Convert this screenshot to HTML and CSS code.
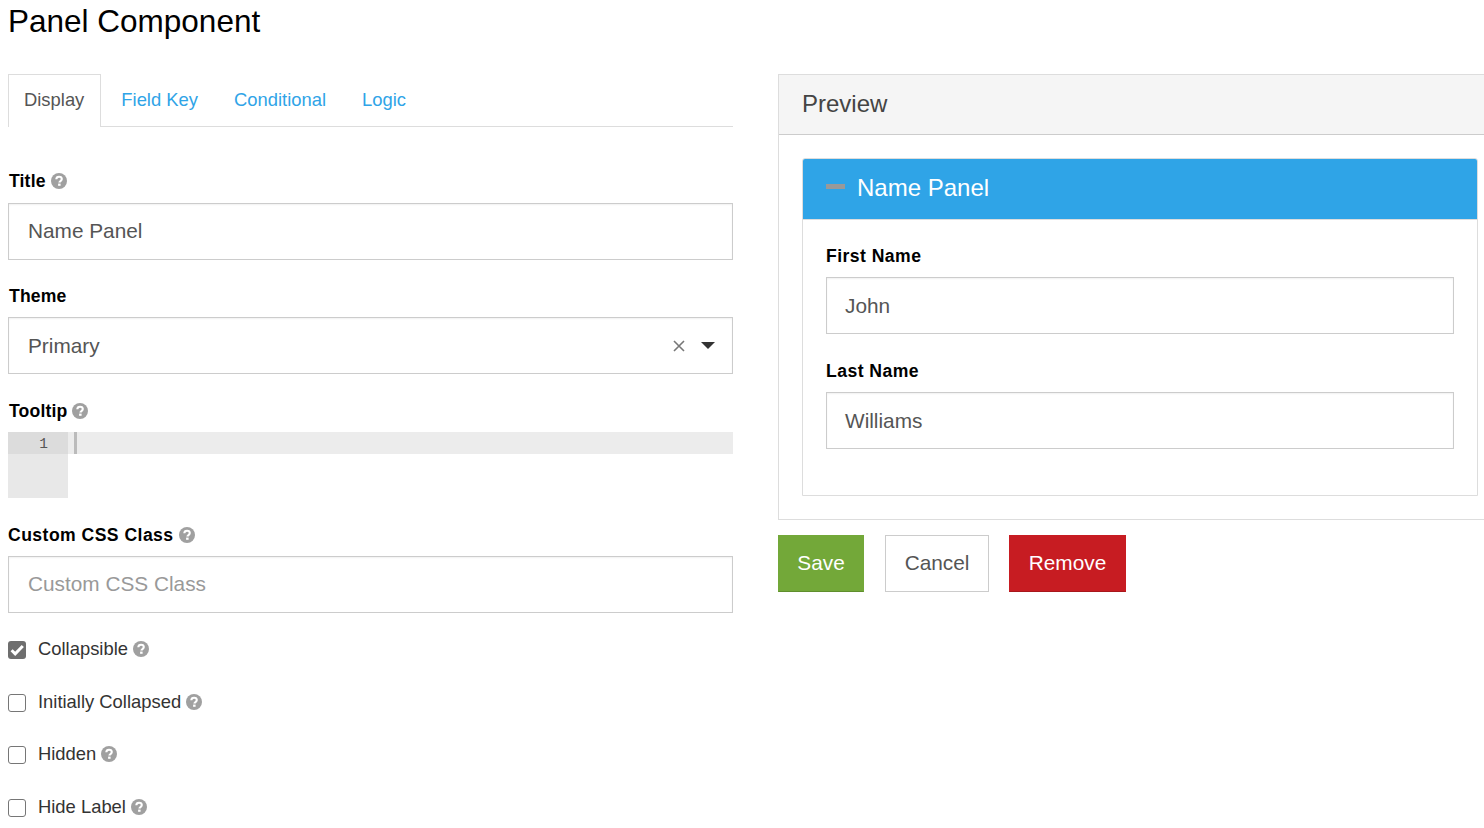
FILE: index.html
```html
<!DOCTYPE html>
<html lang="en">
<head>
  <meta charset="UTF-8">
  <title>Panel Component</title>
  <link rel="stylesheet" href="styles.css">
</head>
<body>
  <svg class="icon-defs" width="0" height="0">
    <symbol id="help" viewBox="0 0 16 16">
      <circle cx="8" cy="8" r="8" fill="#a0a0a0"/>
      <path d="M5.3 6.300C5.400 4.700 6.500 3.800 8 3.800c1.600 0 2.800 .9 2.800 2.300 0 2-2.400 1.900-2.400 3.500" fill="none" stroke="#fff" stroke-width="2.100"/>
      <rect x="7.100" y="10.600" width="2.500" height="2.200" fill="#fff"/>
    </symbol>
  </svg>

  <h1 class="page-title">Panel Component</h1>

  <div class="layout">
    <div class="edit-col">
      <ul class="tabs">
        <li class="tab active">Display</li>
        <li class="tab">Field Key</li>
        <li class="tab">Conditional</li>
        <li class="tab">Logic</li>
      </ul>

      <div class="field field-title">
        <label class="field-label">Title <svg class="help"><use href="#help"/></svg></label>
        <div class="input">Name Panel</div>
      </div>

      <div class="field">
        <label class="field-label">Theme</label>
        <div class="input select">
          <span>Primary</span>
          <span class="select-tools">
            <svg class="clear" width="14" height="14" viewBox="0 0 14 14"><path d="M2 2l10 10M12 2L2 12" stroke="#777" stroke-width="1.600" fill="none"/></svg>
            <span class="caret"></span>
          </span>
        </div>
      </div>

      <div class="field">
        <label class="field-label">Tooltip <svg class="help"><use href="#help"/></svg></label>
        <div class="editor">
          <div class="gutter"><div class="line-no">1</div></div>
          <div class="code"><div class="active-line"><span class="cursor"></span></div></div>
        </div>
      </div>

      <div class="field">
        <label class="field-label wide">Custom CSS Class <svg class="help"><use href="#help"/></svg></label>
        <div class="input placeholder">Custom CSS Class</div>
      </div>

      <div class="check-list">
        <label class="check"><span class="box checked"><svg width="18" height="18" viewBox="0 0 18 18"><path d="M3.600 9.300l3.600 3.600L14.800 5" fill="none" stroke="#fff" stroke-width="3"/></svg></span>Collapsible <svg class="help"><use href="#help"/></svg></label>
        <label class="check"><span class="box"></span>Initially Collapsed <svg class="help"><use href="#help"/></svg></label>
        <label class="check"><span class="box"></span>Hidden <svg class="help"><use href="#help"/></svg></label>
        <label class="check"><span class="box"></span>Hide Label <svg class="help"><use href="#help"/></svg></label>
      </div>
    </div>

    <div class="preview-col">
      <div class="card">
        <div class="card-head">Preview</div>
        <div class="card-body">
          <div class="panel">
            <div class="panel-head"><span class="minus"></span>Name Panel</div>
            <div class="panel-body">
              <div class="field">
                <label class="field-label wide">First Name</label>
                <div class="input">John</div>
              </div>
              <div class="field">
                <label class="field-label wide">Last Name</label>
                <div class="input">Williams</div>
              </div>
            </div>
          </div>
        </div>
      </div>
      <div class="actions">
        <button class="btn btn-save">Save</button>
        <button class="btn btn-cancel">Cancel</button>
        <button class="btn btn-remove">Remove</button>
      </div>
    </div>
  </div>
</body>
</html>
```

FILE: styles.css
```css
html, body {
  height: 828px;
  overflow: hidden;
}
body {
  margin: 0;
  padding: 0 8px;
  font-family: "Liberation Sans", Arial, sans-serif;
  color: #555;
  background: #fff;
}
.icon-defs {
  position: absolute;
}
.page-title {
  margin: 0;
  padding-top: 3px;
  height: 74px;
  box-sizing: border-box;
  font-size: 31.500px;
  line-height: 36px;
  font-weight: 400;
  color: #000;
}
.layout {
  display: grid;
  grid-template-columns: 725px 720px;
  column-gap: 45px;
}

/* tabs */
.tabs {
  display: flex;
  margin: 0;
  padding: 0;
  list-style: none;
  height: 53px;
  box-sizing: border-box;
  border-bottom: 1px solid #ddd;
}
.tab {
  height: 53px;
  box-sizing: border-box;
  padding: 15px 16px 0 20px;
  font-size: 18.400px;
  line-height: 22px;
  color: #2fa4e7;
}
.tab.active {
  padding: 14px 16px 0 15px;
  border: 1px solid #ddd;
  border-bottom: 0;
  background: #fff;
  color: #555;
}

/* fields */
.field {
  margin-bottom: 25px;
}
.field-title {
  margin-top: 43px;
  margin-bottom: 24px;
}
.field-label {
  display: flex;
  align-items: center;
  gap: 5px;
  height: 22px;
  margin-bottom: 10px;
  padding: 1px 0 0 1px;
  font-size: 17.600px;
  line-height: 22px;
  font-weight: 700;
  letter-spacing: .15px;
  color: #000;
}
.field-title .field-label {
  margin-bottom: 11px;
  padding-top: 0;
}
.field-label.wide {
  padding-left: 0;
  letter-spacing: .45px;
}
.help {
  width: 16px;
  height: 16px;
  flex: none;
}
.input {
  height: 57px;
  box-sizing: border-box;
  padding: 0 18px;
  border: 1px solid #ccc;
  box-shadow: inset 0 1px 2px rgba(0, 0, 0, .06);
  font-size: 20.800px;
  line-height: 53px;
  color: #555;
  background: #fff;
}
.edit-col .input {
  padding-left: 19px;
}
.preview-col .input {
  line-height: 55px;
}
.input.placeholder {
  color: #999;
}
.select {
  display: flex;
  justify-content: space-between;
  align-items: center;
}
.select-tools {
  display: flex;
  align-items: center;
  gap: 15px;
  margin-right: -1px;
}
.caret {
  width: 0;
  height: 0;
  border-left: 7.500px solid transparent;
  border-right: 7.500px solid transparent;
  border-top: 7px solid #333;
  margin-top: -1px;
}

/* tooltip editor */
.editor {
  display: flex;
  height: 66px;
}
.gutter {
  width: 60px;
  height: 66px;
  background: #e8e8e8;
}
.line-no {
  height: 22px;
  padding-right: 20px;
  background: #dcdcdc;
  font-family: "Liberation Mono", monospace;
  font-size: 14.500px;
  line-height: 24px;
  text-align: right;
  color: #555;
}
.code {
  flex: 1;
}
.active-line {
  height: 22px;
  padding-left: 6px;
  background: #ececec;
}
.cursor {
  display: block;
  width: 3px;
  height: 22px;
  background: #bbb;
}

/* checkboxes */
.check-list {
  display: flex;
  flex-direction: column;
  gap: 30px;
  margin-top: 23px;
}
.check {
  display: flex;
  align-items: center;
  height: 22.500px;
  font-size: 18.400px;
  line-height: 22px;
  color: #333;
}
.check .help {
  margin-left: 5px;
}
.box {
  display: block;
  width: 18px;
  height: 18px;
  margin: 2px 12px 0 0;
  box-sizing: border-box;
  border: 1px solid #767676;
  border-radius: 3px;
  background: #fff;
}
.box.checked {
  border: 0;
  background: #6e6e6e;
}
.box svg {
  display: block;
}

/* preview */
.card {
  border: 1px solid #ddd;
  height: 446px;
  box-sizing: border-box;
}
.card-head {
  height: 60px;
  box-sizing: border-box;
  padding: 0 23px;
  background: #f5f5f5;
  border-bottom: 1px solid #ccc;
  font-size: 24px;
  line-height: 58px;
  color: #444;
}
.card-body {
  padding: 23px;
}
.panel {
  width: 676px;
  height: 338px;
  box-sizing: border-box;
  border: 1px solid #ddd;
  border-radius: 3px 3px 0 0;
}
.panel-head {
  display: flex;
  align-items: center;
  height: 61px;
  box-sizing: border-box;
  padding: 0 0 3px 23px;
  background: #2fa4e7;
  border-bottom: 1px solid #ddd;
  border-radius: 2px 2px 0 0;
  font-size: 24px;
  color: #fff;
}
.minus {
  width: 19px;
  height: 5px;
  margin: -3px 12px 0 0;
  background: #999;
}
.panel-body {
  padding: 24px 23px 0;
}

/* buttons */
.actions {
  display: flex;
  margin-top: 15px;
}
.btn {
  height: 57px;
  box-sizing: border-box;
  padding: 0 0 2px;
  border: 1px solid transparent;
  border-radius: 0;
  font-family: inherit;
  font-size: 20.800px;
  color: #fff;
}
.btn-save {
  width: 86px;
  background: #73a839;
  border-bottom-color: #5f8e2d;
}
.btn-cancel {
  width: 104px;
  margin-left: 21px;
  background: #fff;
  border-color: #ccc;
  color: #555;
}
.btn-remove {
  width: 117px;
  margin-left: 20px;
  background: #c71c22;
  border-bottom-color: #a8171c;
}
```
